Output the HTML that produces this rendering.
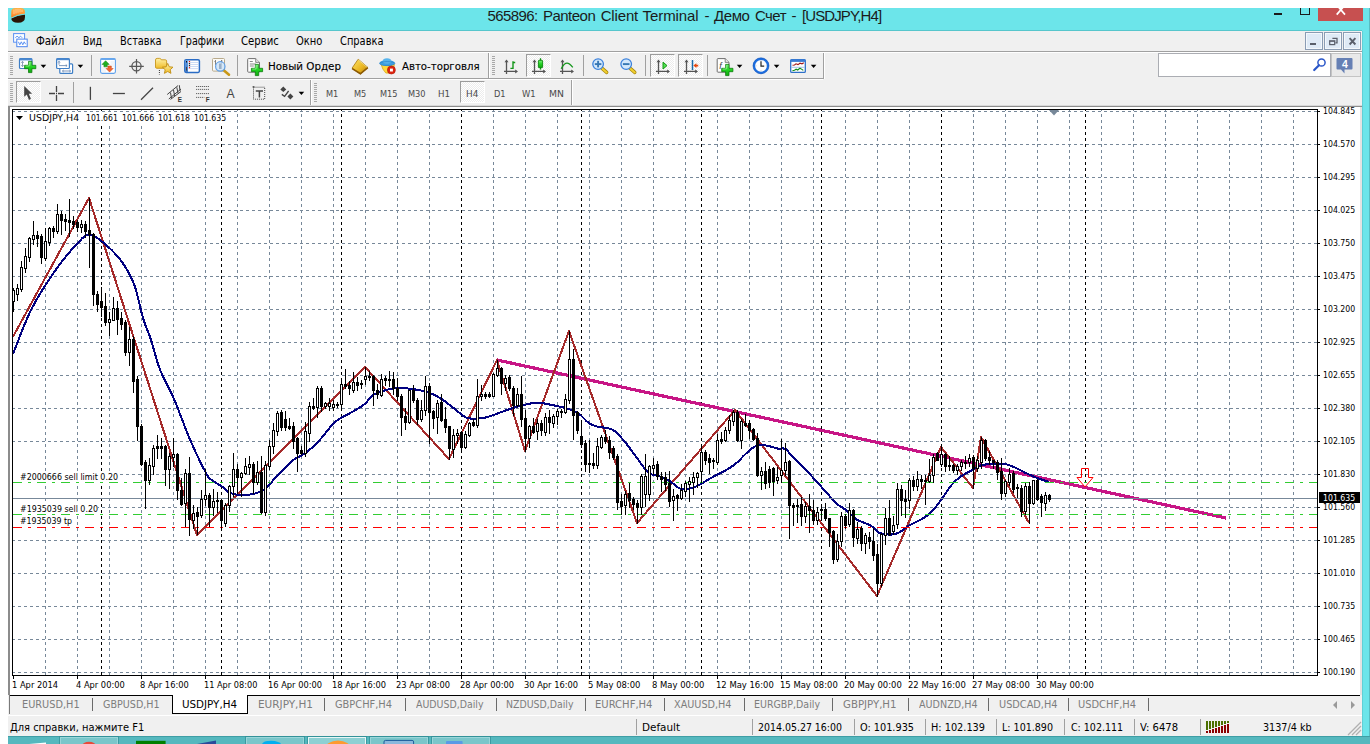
<!DOCTYPE html>
<html lang="ru"><head><meta charset="utf-8"><title>565896: Panteon Client Terminal - Демо Счет - [USDJPY,H4]</title>
<style>
html,body{margin:0;padding:0;background:#fff;}
body{width:1370px;height:744px;position:relative;overflow:hidden;font-family:"Liberation Sans",sans-serif;}
.a{position:absolute;display:block;}
.t{position:absolute;white-space:pre;font-family:"Liberation Sans",sans-serif;}
.s{font-family:"DejaVu Sans Condensed","DejaVu Sans","Liberation Sans",sans-serif;}
svg text{font-family:"Liberation Sans",sans-serif;}
</style></head><body>
<div class="a" style="left:8px;top:8px;width:1362px;height:728px;background:#6ce5ea;"></div><div class="a" style="left:8px;top:30px;width:1354px;height:1px;background:#56c6cc;"></div><div class="a" style="left:1369px;top:8px;width:1px;height:728px;background:#58bcc2;"></div><div class="a" style="left:1362px;top:31px;width:1px;height:705px;background:#5fd0d6;"></div><div class="a" style="left:8px;top:31px;width:1354px;height:705px;background:#f0f0f0;"></div><div class="t" style="left:487.50px;top:6.92px;font-size:15px;line-height:17.235px;color:#1b1b1b;letter-spacing:-0.603px;">565896:</div><div class="t" style="left:542.90px;top:6.92px;font-size:15px;line-height:17.235px;color:#1b1b1b;letter-spacing:-0.498px;">Panteon</div><div class="t" style="left:600.70px;top:6.92px;font-size:15px;line-height:17.235px;color:#1b1b1b;letter-spacing:-0.158px;">Client</div><div class="t" style="left:642.60px;top:6.92px;font-size:15px;line-height:17.235px;color:#1b1b1b;letter-spacing:-0.085px;">Terminal</div><div class="t" style="left:704.60px;top:6.92px;font-size:15px;line-height:17.235px;color:#1b1b1b;">-</div><div class="t" style="left:714.10px;top:6.92px;font-size:15px;line-height:17.235px;color:#1b1b1b;letter-spacing:-0.439px;">Демо</div><div class="t" style="left:754.90px;top:6.92px;font-size:15px;line-height:17.235px;color:#1b1b1b;letter-spacing:-0.523px;">Счет</div><div class="t" style="left:791.40px;top:6.92px;font-size:15px;line-height:17.235px;color:#1b1b1b;">-</div><div class="t" style="left:801.90px;top:6.92px;font-size:15px;line-height:17.235px;color:#1b1b1b;letter-spacing:-0.875px;">[USDJPY,H4]</div><div class="a" style="left:1274px;top:13px;width:8px;height:2px;background:#1a1a1a;"></div><div class="a" style="left:1300px;top:8px;width:10px;height:7px;background:transparent;border:1px solid #1a1a1a;border-top:none;box-sizing:border-box;"></div><div class="a" style="left:1318px;top:8px;width:45px;height:13px;background:#c75050;"></div><svg class="a" style="left:1335px;top:8px" width="12" height="8"><path d="M1.7,-3 L10,6.6 M10,-3 L1.7,6.6" stroke="#fff" stroke-width="1.7"/></svg><svg class="a" style="left:11px;top:8px" width="15" height="16" viewBox="0 0 15 16"><defs><linearGradient id="og" x1="0" y1="0" x2="0" y2="1"><stop offset="0" stop-color="#ffb040"/><stop offset=".55" stop-color="#ff9a3c"/><stop offset="1" stop-color="#f07818"/></linearGradient></defs><path d="M0.2,10 Q0.2,14.8 7,14.8 Q14,14.8 14,9 L14,6.4 Q6,7 0.2,10.4z" fill="#2a1405"/><path d="M0.2,9.8 L0.2,4.2 Q0.2,0 4.6,0 L9.6,0 Q14,0 14,4.2 L14,5.8 Q6.5,6.4 0.2,9.8 Z" fill="url(#og)"/><path d="M0.2,10.1 Q6.5,6.8 14,6.1" stroke="#6ce5ea" stroke-width=".8" fill="none"/><path d="M3,1.6 v4.6 M5,1 v4.4 M7,.8 v4 M9,1 v3.4 M11,1.6 v2.4" stroke="#ffe2c0" stroke-width=".9" opacity=".75"/></svg><div class="t s" style="left:36.30px;top:34.86px;font-size:12px;line-height:13.968px;color:#000;transform:scaleX(0.9489);transform-origin:0 0;">Файл</div><div class="t s" style="left:83.20px;top:34.86px;font-size:12px;line-height:13.968px;color:#000;transform:scaleX(0.8682);transform-origin:0 0;">Вид</div><div class="t s" style="left:120.00px;top:34.86px;font-size:12px;line-height:13.968px;color:#000;transform:scaleX(0.9094);transform-origin:0 0;">Вставка</div><div class="t s" style="left:179.60px;top:34.86px;font-size:12px;line-height:13.968px;color:#000;transform:scaleX(0.8869);transform-origin:0 0;">Графики</div><div class="t s" style="left:241.00px;top:34.86px;font-size:12px;line-height:13.968px;color:#000;transform:scaleX(0.9367);transform-origin:0 0;">Сервис</div><div class="t s" style="left:296.20px;top:34.86px;font-size:12px;line-height:13.968px;color:#000;transform:scaleX(0.9204);transform-origin:0 0;">Окно</div><div class="t s" style="left:340.00px;top:34.86px;font-size:12px;line-height:13.968px;color:#000;transform:scaleX(0.9144);transform-origin:0 0;">Справка</div><svg class="a" style="left:13px;top:33px" width="16" height="16" viewBox="0 0 16 16"><rect x="0.6" y="0.6" width="11" height="8.6" fill="#fbfdff" stroke="#5a90f2" stroke-width="1"/><path d="M2.4,4.8 l1.8,-1.8 l1.6,1.8 l1.8,-1.6 l1.6,1.6" stroke="#4a86f0" fill="none" stroke-width=".9"/><rect x="3.8" y="6.1" width="10.4" height="7.6" fill="#fff" stroke="#4a84ee" stroke-width="1"/><path d="M5.4,8.8 l1.4,3 l1.5,-3 l1.5,3 l1.4,-3 l1.4,2.4" stroke="#4a86f0" fill="none" stroke-width=".9"/></svg><div class="a" style="left:1305px;top:32px;width:17.5px;height:17.5px;background:#dfeaf6;border:1px solid #8a9cb4;box-sizing:border-box;box-shadow:inset 0 0 0 1px #f4f8fc;"></div><div class="a" style="left:1324px;top:32px;width:17.5px;height:17.5px;background:#dfeaf6;border:1px solid #8a9cb4;box-sizing:border-box;box-shadow:inset 0 0 0 1px #f4f8fc;"></div><div class="a" style="left:1343px;top:32px;width:17.5px;height:17.5px;background:#dfeaf6;border:1px solid #8a9cb4;box-sizing:border-box;box-shadow:inset 0 0 0 1px #f4f8fc;"></div><svg class="a" style="left:1305px;top:32px" width="56" height="18"><rect x="5" y="11" width="6" height="2" fill="#5a5f6b"/><path d="M27.4,6.3 h4.6 v4.6 h-1.6" stroke="#5a5f6b" fill="none" stroke-width="1.3"/><rect x="24.7" y="9.2" width="5" height="3.4" fill="none" stroke="#5a5f6b" stroke-width="1.2"/><path d="M24.1,8.8 h6.2" stroke="#5a5f6b" stroke-width="1"/><path d="M44.6,6.2 l5.8,6.3 M50.4,6.2 l-5.8,6.3" stroke="#5a5f6b" stroke-width="1.9"/></svg><div class="a" style="left:8px;top:51px;width:1354px;height:1px;background:#a0a0a0;"></div><div class="a" style="left:8px;top:52px;width:1354px;height:1px;background:#fff;"></div><div class="a" style="left:8px;top:78px;width:815px;height:1px;background:#a0a0a0;"></div><div class="a" style="left:8px;top:79px;width:815px;height:1px;background:#fff;"></div><div class="a" style="left:823px;top:53px;width:1px;height:26px;background:#a0a0a0;"></div><div class="a" style="left:824px;top:53px;width:1px;height:26px;background:#fff;"></div><div class="a" style="left:488px;top:53px;width:1px;height:25px;background:#a0a0a0;"></div><div class="a" style="left:489px;top:53px;width:1px;height:25px;background:#fff;"></div><div class="a" style="left:571px;top:80px;width:1px;height:25px;background:#a0a0a0;"></div><div class="a" style="left:572px;top:80px;width:1px;height:25px;background:#fff;"></div><div class="a" style="left:310px;top:80px;width:1px;height:25px;background:#a0a0a0;"></div><div class="a" style="left:311px;top:80px;width:1px;height:25px;background:#fff;"></div><div class="a" style="left:10px;top:56px;width:3px;height:19px;background:repeating-linear-gradient(#a8a8a8 0 1px,transparent 1px 2px)"></div><div class="a" style="left:492px;top:56px;width:3px;height:19px;background:repeating-linear-gradient(#a8a8a8 0 1px,transparent 1px 2px)"></div><div class="a" style="left:10px;top:83px;width:3px;height:19px;background:repeating-linear-gradient(#a8a8a8 0 1px,transparent 1px 2px)"></div><div class="a" style="left:314px;top:83px;width:3px;height:19px;background:repeating-linear-gradient(#a8a8a8 0 1px,transparent 1px 2px)"></div><div class="a" style="left:91px;top:55px;width:1px;height:21px;background:#a0a0a0;"></div><div class="a" style="left:237px;top:55px;width:1px;height:21px;background:#a0a0a0;"></div><div class="a" style="left:583px;top:55px;width:1px;height:21px;background:#a0a0a0;"></div><div class="a" style="left:645px;top:55px;width:1px;height:21px;background:#a0a0a0;"></div><div class="a" style="left:707px;top:55px;width:1px;height:21px;background:#a0a0a0;"></div><div class="a" style="left:73px;top:82px;width:1px;height:21px;background:#a0a0a0;"></div><div class="a" style="left:526px;top:54px;width:25px;height:23px;background:#f6f6f6;border:1px solid #9c9c9c;border-right-color:#fff;border-bottom-color:#fff;box-sizing:border-box;background-image:repeating-conic-gradient(#fff 0 25%,#ececec 0 50%);background-size:2px 2px;"></div><div class="a" style="left:650px;top:54px;width:25px;height:23px;background:#f6f6f6;border:1px solid #9c9c9c;border-right-color:#fff;border-bottom-color:#fff;box-sizing:border-box;background-image:repeating-conic-gradient(#fff 0 25%,#ececec 0 50%);background-size:2px 2px;"></div><div class="a" style="left:678px;top:54px;width:25px;height:23px;background:#f6f6f6;border:1px solid #9c9c9c;border-right-color:#fff;border-bottom-color:#fff;box-sizing:border-box;background-image:repeating-conic-gradient(#fff 0 25%,#ececec 0 50%);background-size:2px 2px;"></div><div class="a" style="left:16px;top:81px;width:25px;height:22px;background:#f6f6f6;border:1px solid #9c9c9c;border-right-color:#fff;border-bottom-color:#fff;box-sizing:border-box;background-image:repeating-conic-gradient(#fff 0 25%,#ececec 0 50%);background-size:2px 2px;"></div><div class="a" style="left:460px;top:81px;width:25px;height:22px;background:#f6f6f6;border:1px solid #9c9c9c;border-right-color:#fff;border-bottom-color:#fff;box-sizing:border-box;background-image:repeating-conic-gradient(#fff 0 25%,#ececec 0 50%);background-size:2px 2px;"></div><svg class="a" style="left:0;top:0" width="1370" height="110" viewBox="0 0 1370 110"><defs>
<linearGradient id="gp" x1="0" y1="0" x2="0" y2="1"><stop offset="0" stop-color="#7df07d"/><stop offset=".5" stop-color="#1fd21f"/><stop offset="1" stop-color="#12a512"/></linearGradient>
<linearGradient id="gy" x1="0" y1="0" x2="0" y2="1"><stop offset="0" stop-color="#fff2a8"/><stop offset="1" stop-color="#f0bc28"/></linearGradient>
<linearGradient id="gb" x1="0" y1="0" x2="1" y2="1"><stop offset="0" stop-color="#ffe668"/><stop offset=".6" stop-color="#e8b420"/><stop offset="1" stop-color="#b07808"/></linearGradient>
<linearGradient id="gl" x1="0" y1="0" x2="0" y2="1"><stop offset="0" stop-color="#e8f4fe"/><stop offset="1" stop-color="#b8d8f4"/></linearGradient>
<linearGradient id="gw" x1="0" y1="0" x2="0" y2="1"><stop offset="0" stop-color="#5a9ae6"/><stop offset="1" stop-color="#2e6cc0"/></linearGradient>
<g id="plus"><path d="M-1.7,-5.6 h3.4 v3.9 h3.9 v3.4 h-3.9 v3.9 h-3.4 v-3.9 h-3.9 v-3.4 h3.9z" fill="url(#gp)" stroke="#0c7c0c" stroke-width=".8" stroke-linejoin="miter"/><path d="M-1,-4.6 v3.6 h-3.6" stroke="#b8f8b8" stroke-width=".7" fill="none" opacity=".8"/></g>
<g id="dd"><path d="M-2.8,0 h5.6 l-2.8,3.2z" fill="#000"/></g>
<g id="axes"><path d="M2.5,1 v13.5 M0,12 h13" stroke="#555" stroke-width="1.3" fill="none"/><path d="M2.5,0 l-2,2.8 h4z M14,12 l-2.8,-2 v4z" fill="#555"/></g>
</defs><rect x="19.5" y="58.7" width="12.5" height="9.8" rx="1" fill="#fff" stroke="#3f7fc6" stroke-width="1.2"/><rect x="19.5" y="58.4" width="12.5" height="2" fill="#4a88d0"/><path d="M22.5,61.5 v5 M21.3,62.8 l1.2,-1.5 l1.2,1.5 M21.3,65.2 l1.2,1.5 l1.2,-1.5" stroke="#7f95b0" stroke-width=".9" fill="none"/><use href="#plus" x="30.2" y="67"/><use href="#dd" x="43.4" y="64.8"/><rect x="59.8" y="63.8" width="12.8" height="9.6" rx="1" fill="#fff" stroke="#3f7fc6" stroke-width="1.2"/><rect x="56.6" y="58.7" width="12.8" height="9.8" rx="1" fill="#fff" stroke="#3f7fc6" stroke-width="1.2"/><rect x="56.6" y="58.4" width="12.8" height="1.8" fill="#4a88d0"/><path d="M59,61.3 v3.4 M58,62.5 l1,-1.2 l1,1.2 M59,65.6 h8 M65.8,64.6 l1.3,1 l-1.3,1 M62.5,71 h8 M69.3,70 l1.3,1 l-1.3,1 M63.7,70 l-1.3,1 l1.3,1" stroke="#6f8db5" stroke-width=".9" fill="none"/><use href="#dd" x="80.4" y="64.8"/><rect x="100.6" y="58.6" width="14.8" height="14.8" rx="1.6" fill="#fff" stroke="#5fa0ea" stroke-width="1.1"/><rect x="100.6" y="58.3" width="14.8" height="1.7" rx=".8" fill="#6aa8ee"/><path d="M110.5,62 h3.6 M110.5,64 h3.6 M110.5,66 h3.6 M102,68 h4 M102,70 h4 M102,72 h4" stroke="#dde4ee" stroke-width=".8"/><path d="M105.6,60.7 l3.6,3.7 h-1.9 v2.4 h-3.4 v-2.4 h-1.9z" fill="#20b020" stroke="#0c7c0c" stroke-width=".5"/><path d="M109.6,72.1 l3.6,-3.7 h-1.9 v-2.4 h-3.4 v2.4 h-1.9z" fill="#f26430" stroke="#c43c0c" stroke-width=".5"/><circle cx="136.5" cy="66.3" r="4.6" fill="none" stroke="#585858" stroke-width="1.3"/><path d="M129.2,66.3 h14.6 M136.5,59 v14.6" stroke="#585858" stroke-width="1.2"/><path d="M155.5,60 q0,-1.6 1.6,-1.6 h2.6 q1.2,0 1.6,1.4 h4 q1.3,0 1.3,1.3 v6 q0,1.2 -1.3,1.2 h-8.5 q-1.3,0 -1.3,-1.2z" fill="url(#gy)" stroke="#c8961c" stroke-width=".9"/><path d="M159.4,70 v4.5" stroke="#333" stroke-width="1" stroke-dasharray="1 1"/><path d="M167.7,63.4 l1.55,3.4 l3.7,.4 l-2.75,2.5 l.75,3.65 l-3.25,-1.85 l-3.25,1.85 l.75,-3.65 l-2.75,-2.5 l3.7,-.4z" fill="url(#gy)" stroke="#c08c10" stroke-width=".9"/><rect x="184.8" y="59.8" width="14.6" height="12.6" rx="1.3" fill="#fff" stroke="#2a6cc4" stroke-width="1.5"/><rect x="185.3" y="60.3" width="2.6" height="11.6" fill="url(#gw)"/><path d="M188.5,62.5 h10.5 M188.5,64.5 h10.5 M188.5,66.5 h10.5 M188.5,68.6 h10.5" stroke="#b8cdf0" stroke-width=".7"/><rect x="188.8" y="61" width="1.3" height="1.2" fill="#e01010"/><rect x="188.8" y="63" width="1.3" height="1.2" fill="#222"/><rect x="188.8" y="65" width="1.3" height="1.2" fill="#222"/><rect x="188.8" y="67.1" width="1.3" height="1.2" fill="#e01010"/><rect x="186" y="61" width="1" height="1.5" fill="#111"/><rect x="186" y="67" width="1" height="3.5" fill="#444"/><rect x="212.5" y="58.5" width="12" height="12.6" rx="1" fill="#fbfaf6" stroke="#b8aa8c" stroke-width="1"/><path d="M215.5,60 v5 M214.5,61.5 h1 M221.5,60 v4 M221.5,61 h1" stroke="#777" stroke-width=".9"/><path d="M224,70.4 l5,4.3" stroke="#c89818" stroke-width="2.6" stroke-linecap="round"/><circle cx="220.3" cy="66.4" r="4.7" fill="#cfe4f8" fill-opacity=".85" stroke="#5f9ee6" stroke-width="1.2"/><rect x="219" y="63.5" width="2.6" height="5.5" fill="#9ab0c8"/><path d="M248.5,58.6 h7.2 l3.8,3.8 v9 q0,.8 -.8,.8 h-10.2 q-.8,0 -.8,-.8 v-12 q0,-.8 .8,-.8z" fill="#fff" stroke="#6e6e6e" stroke-width="1"/><path d="M255.7,58.6 v3.8 h3.8" fill="#e8e8e8" stroke="#6e6e6e" stroke-width=".8"/><path d="M249.8,61.5 h3 M249.8,64 h6 M249.8,66 h4" stroke="#8a8a8a" stroke-width="1.1"/><use href="#plus" x="257" y="70"/><path d="M352,68.2 l6.2,-9 l9.8,8.4 l-7.6,6.4z" fill="url(#gb)" stroke="#a87408" stroke-width=".8"/><path d="M352.2,68.6 l8.2,5.2 l7.4,-6.2" fill="none" stroke="#8c5a04" stroke-width="1.6"/><path d="M358.6,60 l8.6,7.4" stroke="#fff4b0" stroke-width=".8" opacity=".8"/><path d="M381,64 l13.4,.4 l-1.2,6.2 q-3,3.4 -7.4,2.4 q-3.4,-3.2 -4.8,-9z" fill="#ffd83c" stroke="#d8a818" stroke-width=".8"/><ellipse cx="387.2" cy="63" rx="7.8" ry="2.9" fill="#3f9fe0"/><ellipse cx="387" cy="61" rx="4.2" ry="2.8" fill="#58b4ec"/><ellipse cx="387.2" cy="63.6" rx="7.6" ry="2" fill="none" stroke="#2a80c8" stroke-width=".7"/><circle cx="391.4" cy="70" r="4" fill="#dd2410" stroke="#b01404" stroke-width=".6"/><rect x="390" y="68.6" width="2.9" height="2.9" fill="#fff"/><use href="#axes" x="504" y="59.4"/><path d="M513,61.2 v7.8 M513,62.5 h2.2 M510.4,68.4 h2.6" stroke="#14961a" stroke-width="1.4" fill="none"/><use href="#axes" x="532" y="59.4"/><path d="M540.5,58.2 v11.4" stroke="#14961a" stroke-width="1.3"/><rect x="538.4" y="60.3" width="4.2" height="7.4" rx=".6" fill="url(#gp)" stroke="#0d8a0d" stroke-width=".9"/><use href="#axes" x="560" y="59.4"/><path d="M561.2,68.8 q3,-5.6 5.8,-5.6 q2.4,0 5.8,4.2" stroke="#14961a" stroke-width="1.3" fill="none"/><path d="M602.1,68.4 l4.6,4" stroke="#a8860c" stroke-width="3.4" stroke-linecap="round"/><path d="M602.1,68.4 l4.6,4" stroke="#f0d030" stroke-width="2" stroke-linecap="round"/><circle cx="598.1" cy="64.1" r="5.3" fill="#d4e8fb" stroke="#3c82dc" stroke-width="1.3"/><path d="M594.8,64.1 h6.6" stroke="#3878b4" stroke-width="1.9"/><path d="M598.1,60.8 v6.6" stroke="#3878b4" stroke-width="1.9"/><path d="M630.2,68.4 l4.6,4" stroke="#a8860c" stroke-width="3.4" stroke-linecap="round"/><path d="M630.2,68.4 l4.6,4" stroke="#f0d030" stroke-width="2" stroke-linecap="round"/><circle cx="626.2" cy="64.1" r="5.3" fill="#d4e8fb" stroke="#3c82dc" stroke-width="1.3"/><path d="M622.9,64.1 h6.6" stroke="#3878b4" stroke-width="1.9"/><use href="#axes" x="656" y="59.4"/><path d="M663,62.2 v6.8 l4,-3.4z" fill="#50e050" stroke="#149a14" stroke-width="1"/><use href="#axes" x="684" y="59.4"/><path d="M692.5,60 v10" stroke="#1a6aa8" stroke-width="1.5"/><path d="M693.4,65.6 l3,-2.4 v1.6 h1.8 v1.6 h-1.8 v1.6z" fill="#e8480c"/><path d="M718,58.6 h7.2 l3.8,3.8 v9 q0,.8 -.8,.8 h-10.2 q-.8,0 -.8,-.8 v-12 q0,-.8 .8,-.8z" fill="#fff" stroke="#6e6e6e" stroke-width="1"/><path d="M725.2,58.6 v3.8 h3.8" fill="#e8e8e8" stroke="#6e6e6e" stroke-width=".8"/><text x="719.3" y="68.5" font-size="9" font-style="italic" font-family="Liberation Serif,serif" fill="#444">f</text><use href="#plus" x="727.3" y="70"/><use href="#dd" x="739.6" y="64.8"/><circle cx="761" cy="65.8" r="7" fill="#fdfdfd" stroke="#1c6ee0" stroke-width="2.2"/><circle cx="761" cy="65.8" r="8" fill="none" stroke="#1450b0" stroke-width=".5"/><path d="M761,61.3 v4.8 h3.2" stroke="#222" stroke-width="1.2" fill="none"/><path d="M761,60.3 v.8 M761,70.5 v.8 M755.6,65.8 h.8 M765.8,65.8 h.8" stroke="#9ab" stroke-width=".8"/><use href="#dd" x="776.6" y="64.8"/><rect x="790.7" y="59.6" width="14.6" height="12.8" rx="1" fill="#fff" stroke="#2e70c8" stroke-width="1.3"/><rect x="790.7" y="59.3" width="14.6" height="2.6" fill="#3a7cd4"/><path d="M792.5,65.2 l2,-.2 l1.5,-1.2 l2,.8 l2,-1.4 l2,.6 l1.8,-1" stroke="#a01818" stroke-width="1.1" fill="none"/><path d="M791.5,67.3 h13" stroke="#8fb4e4" stroke-width=".8"/><path d="M792.5,70.6 l2,-.4 l1.6,-1 l1.6,.8 l2.2,-1.8 l2,1.2 l1.4,1" stroke="#148c1c" stroke-width="1.1" fill="none"/><use href="#dd" x="813.6" y="64.8"/><path d="M24.2,85.9 v10.9 l2.6,-2.2 l2.2,5.3 l1.9,-1.1 l-2.1,-5 h3.3z" fill="#444"/><path d="M49,93.5 h6 M58,93.5 h6 M56.5,86 v6 M56.5,95 v6 M56,93.5 h1" stroke="#444" stroke-width="1.3"/><path d="M90.4,86.8 v13.1" stroke="#444" stroke-width="1.3"/><path d="M112.9,93.5 h12" stroke="#444" stroke-width="1.3"/><path d="M141,99.7 L153,87.8" stroke="#444" stroke-width="1.3"/><path d="M167.2,94.5 L178,85.6 M168.8,99 L181,89 M170.5,99.4 L181,91.5" stroke="#444" stroke-width="1" fill="none"/><path d="M170.5,92.5 l1,6 M173.5,90 l1.2,6 M176.8,87.3 l1.2,6 M179.3,85.2 l.8,6" stroke="#444" stroke-width="1"/><path d="M196.2,86.5 H209" stroke="#444" stroke-width="1" stroke-dasharray="1 1"/><path d="M196.2,89.4 H209" stroke="#444" stroke-width="1" stroke-dasharray="1 1"/><path d="M196.2,93.6 H209" stroke="#444" stroke-width="1" stroke-dasharray="1 1"/><path d="M196.2,97.4 H204.5" stroke="#444" stroke-width="1" stroke-dasharray="1 1"/><text x="226.6" y="97.7" font-size="12.2" fill="#444">A</text><rect x="253.5" y="87.2" width="11.2" height="12" fill="none" stroke="#444" stroke-width="1" stroke-dasharray="1 1"/><rect x="252.6" y="86.2" width="1.8" height="1.4" fill="#444"/><path d="M255.8,90.9 h7.2 M259.4,90.9 v6.6" stroke="#444" stroke-width="1.5"/><path d="M283.3,86.4 l3,3 l-3,2.6 l-3,-2.6z M290.4,93.6 l3,2.8 l-3,3 l-3,-3z" fill="#444"/><path d="M281.8,94.4 l2.8,2 l4,-5.4" stroke="#444" stroke-width="1.3" fill="none"/><use href="#dd" x="301.4" y="91.8"/></svg><div class="t" style="left:177.80px;top:96.00px;font-size:6.3px;line-height:7.2387px;color:#333;font-weight:bold;">E</div><div class="t" style="left:205.70px;top:96.00px;font-size:6.3px;line-height:7.2387px;color:#333;font-weight:bold;">F</div><div class="t s" style="left:268.40px;top:60.59px;font-size:11px;line-height:12.804px;color:#000;transform:scaleX(1.0428);transform-origin:0 0;-webkit-text-stroke:0.12px #000;">Новый Ордер</div><div class="t s" style="left:402.30px;top:60.59px;font-size:11px;line-height:12.804px;color:#000;transform:scaleX(1.0271);transform-origin:0 0;-webkit-text-stroke:0.12px #000;">Авто-торговля</div><div class="t s" style="left:325.70px;top:89.25px;font-size:9px;line-height:10.476px;color:#4a4a4a;transform:scaleX(1.0134);transform-origin:0 0;">M1</div><div class="t s" style="left:353.70px;top:89.25px;font-size:9px;line-height:10.476px;color:#4a4a4a;transform:scaleX(1.0134);transform-origin:0 0;">M5</div><div class="t s" style="left:379.50px;top:89.25px;font-size:9px;line-height:10.476px;color:#4a4a4a;transform:scaleX(1.0123);transform-origin:0 0;">M15</div><div class="t s" style="left:407.50px;top:89.25px;font-size:9px;line-height:10.476px;color:#4a4a4a;transform:scaleX(1.0123);transform-origin:0 0;">M30</div><div class="t s" style="left:438.00px;top:89.25px;font-size:9px;line-height:10.476px;color:#4a4a4a;transform:scaleX(1.0675);transform-origin:0 0;">H1</div><div class="t s" style="left:465.50px;top:89.25px;font-size:9px;line-height:10.476px;color:#4a4a4a;transform:scaleX(1.0942);transform-origin:0 0;">H4</div><div class="t s" style="left:494.40px;top:89.25px;font-size:9px;line-height:10.476px;color:#4a4a4a;transform:scaleX(1.0188);transform-origin:0 0;">D1</div><div class="t s" style="left:522.40px;top:89.25px;font-size:9px;line-height:10.476px;color:#4a4a4a;transform:scaleX(1.0337);transform-origin:0 0;">W1</div><div class="t s" style="left:548.70px;top:89.25px;font-size:9px;line-height:10.476px;color:#4a4a4a;transform:scaleX(1.1424);transform-origin:0 0;">MN</div><div class="a" style="left:1158px;top:53px;width:173px;height:24px;background:#fff;border:1px solid #abadb3;box-sizing:border-box;"></div><div class="a" style="left:1331px;top:53px;width:30px;height:24px;background:#e9e9e9;border:1px solid #c4c4c4;box-sizing:border-box;"></div><svg class="a" style="left:1311px;top:56px" width="18" height="18"><circle cx="10.5" cy="6.5" r="3.6" fill="#fff" stroke="#2a56c8" stroke-width="1.5"/><path d="M8,9.2 L3.2,14" stroke="#2a56c8" stroke-width="2.2" stroke-linecap="round"/></svg><svg class="a" style="left:1336px;top:57px" width="18" height="18"><path d="M1.5,1 h14 q1,0 1,1 v9.5 q0,1 -1,1 h-7 v4 l-3.5,-4 h-3.5 q-1,0 -1,-1 v-9.5 q0,-1 1,-1z" fill="#6680b4"/><text x="9" y="10.8" font-family="Liberation Sans,sans-serif" font-weight="bold" font-size="10.5" fill="#fff" text-anchor="middle">4</text></svg><div class="a" style="left:8px;top:105px;width:1354px;height:1px;background:#d9d9d9;"></div><div class="a" style="left:8px;top:106px;width:1354px;height:1px;background:#8c8c8c;"></div><div class="a" style="left:8px;top:107px;width:1353px;height:588px;background:#fff;"></div><div class="a" style="left:8px;top:107px;width:2px;height:588px;background:#8c8c8c;"></div><div class="a" style="left:9px;top:695px;width:1px;height:19px;background:#7a7a7a;"></div><div class="a" style="left:1360px;top:107px;width:2px;height:588px;background:#e3e3e3;"></div><svg class="a" style="left:0;top:0" width="1370" height="744" shape-rendering="crispEdges"><defs><clipPath id="cc"><rect x="13" y="110" width="1304" height="565"/></clipPath></defs><path d="M13,111.5 H1317 M13,144.5 H1317 M13,177.5 H1317 M13,210.5 H1317 M13,243.5 H1317 M13,276.5 H1317 M13,309.5 H1317 M13,342.5 H1317 M13,375.5 H1317 M13,408.5 H1317 M13,441.5 H1317 M13,474.5 H1317 M13,507.5 H1317 M13,540.5 H1317 M13,573.5 H1317 M13,606.5 H1317 M13,639.5 H1317 M13,672.5 H1317 " stroke="#778899" stroke-width="1" stroke-dasharray="3 3" stroke-dashoffset="1" fill="none"/><path d="M45.5,110 V675 M77.5,110 V675 M109.5,110 V675 M141.5,110 V675 M173.5,110 V675 M205.5,110 V675 M237.5,110 V675 M269.5,110 V675 M301.5,110 V675 M333.5,110 V675 M365.5,110 V675 M397.5,110 V675 M429.5,110 V675 M461.5,110 V675 M493.5,110 V675 M525.5,110 V675 M557.5,110 V675 M589.5,110 V675 M621.5,110 V675 M653.5,110 V675 M685.5,110 V675 M717.5,110 V675 M749.5,110 V675 M781.5,110 V675 M813.5,110 V675 M845.5,110 V675 M877.5,110 V675 M909.5,110 V675 M941.5,110 V675 M973.5,110 V675 M1005.5,110 V675 M1037.5,110 V675 M1069.5,110 V675 M1101.5,110 V675 M1133.5,110 V675 M1165.5,110 V675 M1197.5,110 V675 M1229.5,110 V675 M1261.5,110 V675 M1293.5,110 V675 " stroke="#778899" stroke-width="1" stroke-dasharray="3 3" stroke-dashoffset="2" fill="none"/><path d="M101.5,110 V675 M221.5,110 V675 M341.5,110 V675 M461.5,110 V675 M581.5,110 V675 M701.5,110 V675 M821.5,110 V675 M941.5,110 V675 M1085.5,110 V675 " stroke="#000" stroke-width="1" stroke-dasharray="3 3" stroke-dashoffset="2" fill="none"/><g clip-path="url(#cc)"><line x1="497" y1="360" x2="1226" y2="518" stroke="#c71585" stroke-width="3.2"/><polyline points="13,336.7 89,198 197,535 365,367 449,459 497,360 525,451 569,331 637,523 735,410 877,596 941,447 973,488 981,437 1029,523" stroke="#a52a2a" stroke-width="2.05" fill="none" stroke-linejoin="round"/><path d="M13,354 C16.2,346.3 24.8,322.1 32,308 C39.2,293.9 48.7,280.0 56,269.5 C63.3,259.0 70.5,250.8 76,245 C81.5,239.2 84.2,234.7 89,234.5 C93.8,234.3 99.5,239.4 105,244 C110.5,248.6 117.2,255.3 122,262 C126.8,268.7 130.5,274.7 134,284 C137.5,293.3 140.2,308.7 143,318 C145.8,327.3 148.2,331.4 151,340 C153.8,348.6 156.2,359.8 160,369.6 C163.8,379.4 169.0,387.4 174,399 C179.0,410.6 184.7,427.2 190,439.5 C195.3,451.8 202.4,466.3 206,473 C209.6,479.7 208.7,477.6 211.4,479.8 C214.1,482.1 218.9,484.3 222,486.5 C225.1,488.7 226.8,491.6 230,493 C233.2,494.4 236.9,494.9 241,495 C245.1,495.1 250.4,494.8 254.4,493.8 C258.4,492.8 261.4,491.8 265,489 C268.6,486.2 271.5,481.7 276,477 C280.5,472.3 287.1,465.0 292,461 C296.9,457.0 301.0,456.4 305.5,453 C310.0,449.6 314.1,446.0 319,440.8 C323.9,435.6 330.1,426.5 335,422 C339.9,417.5 343.7,416.9 348.5,414 C353.3,411.1 359.8,407.9 364,404.6 C368.2,401.4 369.7,397.1 374,394.5 C378.3,391.9 385.9,390.1 390,389 C394.1,387.9 394.7,388.0 398.5,388 C402.3,388.0 407.6,388.2 412.6,389 C417.6,389.8 424.0,390.9 428.7,392.5 C433.4,394.1 436.8,396.0 440.8,398.5 C444.9,401.0 449.0,404.5 453,407.6 C457.0,410.7 461.7,415.1 465,417 C468.3,418.9 469.7,418.6 473,418.7 C476.3,418.8 481.0,418.5 485,417.7 C489.0,416.9 492.7,415.2 497,413.7 C501.3,412.2 506.2,410.1 511,408.6 C515.8,407.1 521.0,405.6 525.5,404.6 C530.0,403.6 533.9,402.6 538,402.6 C542.1,402.6 545.7,403.8 550,404.6 C554.3,405.5 559.4,406.4 564,407.7 C568.6,409.0 573.4,410.2 577.5,412.7 C581.6,415.2 585.3,420.5 588.5,422.8 C591.7,425.1 592.6,425.2 596.6,426.4 C600.6,427.6 608.0,427.2 612.7,429.8 C617.4,432.4 621.0,437.3 625,442 C629.0,446.7 633.1,452.9 637,458 C640.9,463.1 644.6,469.6 648.5,472.7 C652.4,475.8 656.9,475.2 660.6,476.7 C664.3,478.2 667.2,479.7 670.6,481.7 C674.0,483.7 677.0,487.8 680.7,488.8 C684.4,489.8 689.1,488.8 692.8,487.8 C696.5,486.8 699.3,484.7 703,482.7 C706.7,480.7 711.0,477.9 715,475.7 C719.0,473.5 723.3,471.8 727,469.6 C730.7,467.4 734.0,465.1 737,462.6 C740.0,460.1 742.0,457.2 745,454.5 C748.0,451.8 751.6,448.0 755,446.5 C758.4,445.0 761.6,445.1 765.4,445.4 C769.1,445.7 774.1,447.9 777.5,448.5 C780.9,449.1 783.4,447.8 785.6,448.9 C787.9,450.0 787.6,451.5 791,455 C794.4,458.5 800.8,464.5 806,470 C811.2,475.5 817.3,482.4 822.4,488 C827.5,493.6 832.5,499.7 836.5,503.4 C840.5,507.1 843.2,507.7 846.6,510.4 C850.0,513.1 852.7,517.0 856.7,519.5 C860.7,522.0 867.1,523.4 870.8,525.6 C874.5,527.8 875.5,531.1 878.9,532.6 C882.3,534.1 887.6,534.6 891,534.6 C894.4,534.6 896.0,534.1 899,532.6 C902.0,531.1 905.3,527.8 909,525.6 C912.7,523.4 917.3,521.7 921,519.5 C924.7,517.3 927.6,515.9 931,512.5 C934.4,509.1 938.0,504.0 941.4,499.4 C944.8,494.8 948.1,488.9 951.5,485 C954.9,481.1 958.0,478.5 961.5,476 C965.0,473.5 969.5,471.8 972.7,470 C975.9,468.2 977.7,466.5 980.7,465.5 C983.7,464.5 986.8,464.2 990.8,464 C994.8,463.8 1001.0,463.4 1005,464 C1009.0,464.6 1011.3,465.9 1015,467.5 C1018.7,469.1 1023.0,471.8 1027,473.6 C1031.0,475.5 1035.3,477.2 1039,478.6 C1042.7,480.0 1047.3,481.4 1049,482" stroke="#000080" stroke-width="2.05" fill="none" stroke-linejoin="round"/></g><path d="M13,482.5 H1317 M13,514.5 H1317" stroke="#32cd32" stroke-width="1" stroke-dasharray="9 6 3 6" fill="none"/><path d="M13,527.5 H1317" stroke="#ff0000" stroke-width="1" stroke-dasharray="9 6 3 6" fill="none"/><path d="M13,498.5 H1317" stroke="#778899" stroke-width="1" fill="none"/><g clip-path="url(#cc)"><path d="M13.5,288 V312 M17.5,284 V301 M21.5,261 V292 M25.5,248 V273 M29.5,237 V262 M33.5,221 V245 M37.5,231 V247 M41.5,234 V264 M45.5,228 V261 M49.5,227 V246 M53.5,226 V238 M57.5,204 V234 M61.5,211 V235 M65.5,214 V231 M69.5,199 V237 M73.5,216 V229 M77.5,220 V232 M81.5,220 V233 M85.5,221 V238 M89.5,198 V268 M93.5,233 V306 M97.5,291 V312 M101.5,287 V317 M105.5,293 V326 M109.5,312 V336 M113.5,297 V321 M117.5,301 V335 M121.5,312 V330 M125.5,320 V356 M129.5,327 V366 M133.5,336 V393 M137.5,376 V441 M141.5,424 V466 M145.5,460 V509 M149.5,458 V485 M153.5,445 V475 M157.5,435 V459 M161.5,438 V459 M165.5,445 V486 M169.5,453 V489 M173.5,438 V467 M177.5,453 V500 M181.5,478 V506 M185.5,469 V527 M189.5,457 V536 M193.5,505 V529 M197.5,507 V535 M201.5,490 V518 M205.5,469 V506 M209.5,493 V527 M213.5,489 V516 M217.5,492 V513 M221.5,499 V528 M225.5,503 V527 M229.5,485 V512 M233.5,453 V497 M237.5,464 V494 M241.5,472 V497 M245.5,458 V475 M249.5,456 V475 M253.5,462 V494 M257.5,461 V485 M261.5,456 V514 M265.5,461 V516 M269.5,440 V470 M273.5,423 V454 M277.5,411 V436 M281.5,410 V431 M285.5,411 V431 M289.5,418 V430 M293.5,422 V449 M297.5,437 V472 M301.5,446 V455 M305.5,422 V457 M309.5,402 V442 M313.5,398 V410 M317.5,386 V418 M321.5,386 V412 M325.5,402 V409 M329.5,398 V411 M333.5,400 V411 M337.5,402 V408 M341.5,379 V409 M345.5,369 V389 M349.5,381 V395 M353.5,372 V393 M357.5,377 V391 M361.5,380 V389 M365.5,367 V385 M369.5,371 V381 M373.5,375 V406 M377.5,384 V399 M381.5,374 V397 M385.5,376 V386 M389.5,371 V387 M393.5,372 V395 M397.5,378 V401 M401.5,394 V436 M405.5,408 V430 M409.5,390 V424 M413.5,385 V403 M417.5,398 V425 M421.5,400 V422 M425.5,376 V416 M429.5,383 V444 M433.5,410 V429 M437.5,400 V434 M441.5,394 V422 M445.5,407 V433 M449.5,426 V460 M453.5,429 V458 M457.5,429 V444 M461.5,431 V450 M465.5,431 V449 M469.5,422 V437 M473.5,419 V427 M477.5,379 V428 M481.5,385 V401 M485.5,392 V399 M489.5,392 V398 M493.5,373 V397 M497.5,360 V377 M501.5,367 V395 M505.5,375 V391 M509.5,375 V391 M513.5,386 V416 M517.5,388 V407 M521.5,376 V427 M525.5,410 V452 M529.5,425 V448 M533.5,418 V434 M537.5,419 V440 M541.5,420 V436 M545.5,413 V436 M549.5,410 V434 M553.5,414 V428 M557.5,409 V425 M561.5,409 V418 M565.5,394 V414 M569.5,331 V404 M573.5,349 V440 M577.5,411 V434 M581.5,421 V448 M585.5,440 V472 M589.5,440 V473 M593.5,453 V469 M597.5,438 V469 M601.5,435 V449 M605.5,430 V444 M609.5,436 V459 M613.5,446 V460 M617.5,454 V510 M621.5,494 V515 M625.5,491 V515 M629.5,483 V508 M633.5,497 V510 M637.5,500 V524 M641.5,474 V515 M645.5,454 V507 M649.5,465 V501 M653.5,458 V475 M657.5,461 V480 M661.5,472 V492 M665.5,472 V491 M669.5,471 V507 M673.5,489 V521 M677.5,494 V511 M681.5,484 V500 M685.5,481 V497 M689.5,477 V502 M693.5,472 V495 M697.5,472 V488 M701.5,444 V483 M705.5,450 V465 M709.5,454 V474 M713.5,458 V469 M717.5,434 V465 M721.5,432 V444 M725.5,427 V442 M729.5,415 V434 M733.5,410 V426 M737.5,410 V442 M741.5,419 V449 M745.5,414 V427 M749.5,420 V439 M753.5,428 V441 M757.5,433 V477 M761.5,467 V490 M765.5,462 V489 M769.5,466 V488 M773.5,467 V496 M777.5,467 V484 M781.5,439 V483 M785.5,443 V476 M789.5,460 V539 M793.5,503 V526 M797.5,499 V523 M801.5,497 V526 M805.5,502 V523 M809.5,494 V533 M813.5,500 V525 M817.5,507 V525 M821.5,504 V521 M825.5,503 V521 M829.5,518 V547 M833.5,530 V564 M837.5,534 V562 M841.5,512 V547 M845.5,514 V529 M849.5,503 V527 M853.5,509 V547 M857.5,522 V544 M861.5,526 V551 M865.5,533 V554 M869.5,532 V549 M873.5,528 V561 M877.5,544 V597 M881.5,533 V587 M885.5,508 V545 M889.5,500 V536 M893.5,516 V535 M897.5,483 V529 M901.5,485 V516 M905.5,490 V518 M909.5,478 V509 M913.5,476 V491 M917.5,471 V491 M921.5,475 V489 M925.5,475 V505 M929.5,459 V483 M933.5,454 V483 M937.5,452 V461 M941.5,446 V467 M945.5,453 V472 M949.5,456 V471 M953.5,464 V473 M957.5,464 V475 M961.5,460 V471 M965.5,456 V469 M969.5,454 V467 M973.5,455 V489 M977.5,456 V472 M981.5,437 V469 M985.5,439 V461 M989.5,451 V465 M993.5,460 V469 M997.5,460 V480 M1001.5,458 V500 M1005.5,480 V497 M1009.5,468 V486 M1013.5,471 V493 M1017.5,484 V498 M1021.5,485 V517 M1025.5,483 V515 M1029.5,482 V524 M1033.5,480 V505 M1037.5,479 V501 M1041.5,494 V517 M1045.5,492 V511 M1049.5,494 V502 " stroke="#000" stroke-width="1" fill="none"/><g fill="#fff" stroke="#000" stroke-width="1"><rect x="12.5" y="290.5" width="2" height="11"/><rect x="16.5" y="288.5" width="2" height="6"/><rect x="20.5" y="267.5" width="2" height="22"/><rect x="24.5" y="256.5" width="2" height="12"/><rect x="28.5" y="238.5" width="2" height="19"/><rect x="32.5" y="235.5" width="2" height="4"/><rect x="44.5" y="241.5" width="2" height="17"/><rect x="48.5" y="228.5" width="2" height="14"/><rect x="56.5" y="214.5" width="2" height="17"/><rect x="80.5" y="224.5" width="2" height="3"/><rect x="108.5" y="319.5" width="2" height="3"/><rect x="112.5" y="308.5" width="2" height="12"/><rect x="128.5" y="339.5" width="2" height="13"/><rect x="148.5" y="465.5" width="2" height="15"/><rect x="152.5" y="448.5" width="2" height="18"/><rect x="168.5" y="456.5" width="2" height="13"/><rect x="172.5" y="454.5" width="2" height="3"/><rect x="184.5" y="473.5" width="2" height="30"/><rect x="192.5" y="513.5" width="2" height="7"/><rect x="200.5" y="499.5" width="2" height="16"/><rect x="204.5" y="495.5" width="2" height="4"/><rect x="212.5" y="501.5" width="2" height="6"/><rect x="224.5" y="505.5" width="2" height="18"/><rect x="228.5" y="486.5" width="2" height="19"/><rect x="232.5" y="469.5" width="2" height="17"/><rect x="240.5" y="473.5" width="2" height="4"/><rect x="244.5" y="466.5" width="2" height="7"/><rect x="248.5" y="464.5" width="2" height="3"/><rect x="256.5" y="472.5" width="2" height="10"/><rect x="264.5" y="465.5" width="2" height="47"/><rect x="268.5" y="446.5" width="2" height="20"/><rect x="272.5" y="430.5" width="2" height="16"/><rect x="276.5" y="413.5" width="2" height="18"/><rect x="304.5" y="431.5" width="2" height="22"/><rect x="308.5" y="406.5" width="2" height="27"/><rect x="316.5" y="388.5" width="2" height="19"/><rect x="324.5" y="403.5" width="2" height="3"/><rect x="328.5" y="403.5" width="2" height="3"/><rect x="332.5" y="404.5" width="2" height="3"/><rect x="340.5" y="384.5" width="2" height="20"/><rect x="352.5" y="382.5" width="2" height="8"/><rect x="364.5" y="376.5" width="2" height="3"/><rect x="380.5" y="379.5" width="2" height="16"/><rect x="408.5" y="390.5" width="2" height="32"/><rect x="420.5" y="410.5" width="2" height="9"/><rect x="424.5" y="386.5" width="2" height="24"/><rect x="436.5" y="403.5" width="2" height="14"/><rect x="452.5" y="435.5" width="2" height="14"/><rect x="456.5" y="433.5" width="2" height="2"/><rect x="464.5" y="434.5" width="2" height="13"/><rect x="468.5" y="423.5" width="2" height="12"/><rect x="476.5" y="396.5" width="2" height="29"/><rect x="480.5" y="394.5" width="2" height="2"/><rect x="492.5" y="374.5" width="2" height="22"/><rect x="496.5" y="368.5" width="2" height="7"/><rect x="504.5" y="378.5" width="2" height="5"/><rect x="516.5" y="394.5" width="2" height="11"/><rect x="528.5" y="426.5" width="2" height="12"/><rect x="536.5" y="423.5" width="2" height="8"/><rect x="544.5" y="417.5" width="2" height="15"/><rect x="552.5" y="416.5" width="2" height="7"/><rect x="556.5" y="411.5" width="2" height="5"/><rect x="564.5" y="399.5" width="2" height="13"/><rect x="568.5" y="359.5" width="2" height="41"/><rect x="596.5" y="446.5" width="2" height="19"/><rect x="600.5" y="437.5" width="2" height="10"/><rect x="624.5" y="494.5" width="2" height="11"/><rect x="640.5" y="476.5" width="2" height="31"/><rect x="644.5" y="476.5" width="2" height="18"/><rect x="648.5" y="466.5" width="2" height="28"/><rect x="652.5" y="465.5" width="2" height="3"/><rect x="672.5" y="496.5" width="2" height="4"/><rect x="680.5" y="490.5" width="2" height="8"/><rect x="684.5" y="483.5" width="2" height="8"/><rect x="688.5" y="481.5" width="2" height="3"/><rect x="692.5" y="477.5" width="2" height="5"/><rect x="696.5" y="473.5" width="2" height="4"/><rect x="700.5" y="452.5" width="2" height="19"/><rect x="716.5" y="440.5" width="2" height="22"/><rect x="724.5" y="430.5" width="2" height="10"/><rect x="728.5" y="420.5" width="2" height="10"/><rect x="732.5" y="412.5" width="2" height="9"/><rect x="740.5" y="421.5" width="2" height="19"/><rect x="760.5" y="471.5" width="2" height="4"/><rect x="776.5" y="477.5" width="2" height="3"/><rect x="780.5" y="470.5" width="2" height="5"/><rect x="784.5" y="462.5" width="2" height="8"/><rect x="804.5" y="506.5" width="2" height="10"/><rect x="816.5" y="512.5" width="2" height="8"/><rect x="836.5" y="541.5" width="2" height="18"/><rect x="840.5" y="516.5" width="2" height="25"/><rect x="848.5" y="510.5" width="2" height="14"/><rect x="856.5" y="529.5" width="2" height="9"/><rect x="864.5" y="535.5" width="2" height="8"/><rect x="880.5" y="534.5" width="2" height="49"/><rect x="884.5" y="518.5" width="2" height="17"/><rect x="892.5" y="525.5" width="2" height="6"/><rect x="896.5" y="489.5" width="2" height="35"/><rect x="908.5" y="480.5" width="2" height="20"/><rect x="916.5" y="479.5" width="2" height="7"/><rect x="928.5" y="475.5" width="2" height="6"/><rect x="932.5" y="457.5" width="2" height="18"/><rect x="940.5" y="454.5" width="2" height="10"/><rect x="956.5" y="466.5" width="2" height="4"/><rect x="960.5" y="462.5" width="2" height="4"/><rect x="968.5" y="458.5" width="2" height="4"/><rect x="976.5" y="460.5" width="2" height="8"/><rect x="980.5" y="440.5" width="2" height="22"/><rect x="1004.5" y="481.5" width="2" height="12"/><rect x="1008.5" y="474.5" width="2" height="8"/><rect x="1024.5" y="486.5" width="2" height="25"/><rect x="1032.5" y="480.5" width="2" height="23"/><rect x="1044.5" y="495.5" width="2" height="8"/></g><g fill="#000"><rect x="36" y="235" width="3" height="4"/><rect x="40" y="236" width="3" height="22"/><rect x="52" y="228" width="3" height="4"/><rect x="60" y="214" width="3" height="7"/><rect x="64" y="219" width="3" height="3"/><rect x="68" y="220" width="3" height="3"/><rect x="72" y="221" width="3" height="4"/><rect x="76" y="222" width="3" height="6"/><rect x="84" y="224" width="3" height="8"/><rect x="88" y="230" width="3" height="5"/><rect x="92" y="234" width="3" height="61"/><rect x="96" y="294" width="3" height="11"/><rect x="100" y="301" width="3" height="7"/><rect x="104" y="306" width="3" height="17"/><rect x="116" y="308" width="3" height="12"/><rect x="120" y="318" width="3" height="7"/><rect x="124" y="322" width="3" height="31"/><rect x="132" y="339" width="3" height="43"/><rect x="136" y="379" width="3" height="48"/><rect x="140" y="426" width="3" height="39"/><rect x="144" y="462" width="3" height="19"/><rect x="156" y="446" width="3" height="3"/><rect x="160" y="446" width="3" height="3"/><rect x="164" y="446" width="3" height="24"/><rect x="176" y="454" width="3" height="37"/><rect x="180" y="490" width="3" height="15"/><rect x="188" y="473" width="3" height="47"/><rect x="196" y="512" width="3" height="5"/><rect x="208" y="495" width="3" height="13"/><rect x="216" y="500" width="3" height="2"/><rect x="220" y="500" width="3" height="21"/><rect x="236" y="469" width="3" height="9"/><rect x="252" y="464" width="3" height="19"/><rect x="260" y="472" width="3" height="41"/><rect x="280" y="412" width="3" height="16"/><rect x="284" y="419" width="3" height="9"/><rect x="288" y="426" width="3" height="3"/><rect x="292" y="426" width="3" height="16"/><rect x="296" y="438" width="3" height="16"/><rect x="300" y="450" width="3" height="4"/><rect x="312" y="406" width="3" height="3"/><rect x="320" y="388" width="3" height="19"/><rect x="336" y="404" width="3" height="2"/><rect x="344" y="384" width="3" height="3"/><rect x="348" y="385" width="3" height="4"/><rect x="356" y="382" width="3" height="4"/><rect x="360" y="383" width="3" height="2"/><rect x="368" y="376" width="3" height="2"/><rect x="372" y="376" width="3" height="15"/><rect x="376" y="390" width="3" height="5"/><rect x="384" y="378" width="3" height="3"/><rect x="388" y="379" width="3" height="2"/><rect x="392" y="379" width="3" height="10"/><rect x="396" y="388" width="3" height="9"/><rect x="400" y="396" width="3" height="22"/><rect x="404" y="416" width="3" height="7"/><rect x="412" y="390" width="3" height="11"/><rect x="416" y="400" width="3" height="20"/><rect x="428" y="386" width="3" height="27"/><rect x="432" y="411" width="3" height="8"/><rect x="440" y="402" width="3" height="19"/><rect x="444" y="419" width="3" height="9"/><rect x="448" y="426" width="3" height="23"/><rect x="460" y="432" width="3" height="16"/><rect x="472" y="422" width="3" height="4"/><rect x="484" y="394" width="3" height="3"/><rect x="488" y="394" width="3" height="3"/><rect x="500" y="368" width="3" height="16"/><rect x="508" y="377" width="3" height="12"/><rect x="512" y="388" width="3" height="18"/><rect x="520" y="394" width="3" height="26"/><rect x="524" y="418" width="3" height="21"/><rect x="532" y="426" width="3" height="7"/><rect x="540" y="423" width="3" height="8"/><rect x="548" y="417" width="3" height="6"/><rect x="560" y="411" width="3" height="2"/><rect x="572" y="359" width="3" height="57"/><rect x="576" y="412" width="3" height="19"/><rect x="580" y="436" width="3" height="9"/><rect x="584" y="443" width="3" height="22"/><rect x="588" y="463" width="3" height="2"/><rect x="592" y="463" width="3" height="3"/><rect x="604" y="437" width="3" height="5"/><rect x="608" y="440" width="3" height="13"/><rect x="612" y="448" width="3" height="10"/><rect x="616" y="456" width="3" height="47"/><rect x="620" y="501" width="3" height="6"/><rect x="628" y="493" width="3" height="8"/><rect x="632" y="499" width="3" height="6"/><rect x="636" y="503" width="3" height="5"/><rect x="656" y="464" width="3" height="13"/><rect x="660" y="476" width="3" height="4"/><rect x="664" y="477" width="3" height="8"/><rect x="668" y="483" width="3" height="19"/><rect x="676" y="495" width="3" height="4"/><rect x="704" y="452" width="3" height="9"/><rect x="708" y="458" width="3" height="5"/><rect x="712" y="460" width="3" height="2"/><rect x="720" y="439" width="3" height="3"/><rect x="736" y="412" width="3" height="29"/><rect x="744" y="423" width="3" height="3"/><rect x="748" y="423" width="3" height="8"/><rect x="752" y="429" width="3" height="11"/><rect x="756" y="438" width="3" height="38"/><rect x="764" y="471" width="3" height="13"/><rect x="768" y="469" width="3" height="14"/><rect x="772" y="468" width="3" height="14"/><rect x="788" y="461" width="3" height="45"/><rect x="792" y="505" width="3" height="3"/><rect x="796" y="505" width="3" height="2"/><rect x="800" y="504" width="3" height="13"/><rect x="808" y="506" width="3" height="5"/><rect x="812" y="510" width="3" height="11"/><rect x="820" y="509" width="3" height="2"/><rect x="824" y="509" width="3" height="10"/><rect x="828" y="518" width="3" height="15"/><rect x="832" y="531" width="3" height="29"/><rect x="844" y="516" width="3" height="10"/><rect x="852" y="510" width="3" height="28"/><rect x="860" y="528" width="3" height="16"/><rect x="868" y="537" width="3" height="5"/><rect x="872" y="541" width="3" height="15"/><rect x="876" y="554" width="3" height="30"/><rect x="888" y="518" width="3" height="17"/><rect x="900" y="489" width="3" height="12"/><rect x="904" y="499" width="3" height="3"/><rect x="912" y="480" width="3" height="7"/><rect x="920" y="479" width="3" height="3"/><rect x="924" y="480" width="3" height="2"/><rect x="936" y="453" width="3" height="8"/><rect x="944" y="454" width="3" height="13"/><rect x="948" y="465" width="3" height="2"/><rect x="952" y="465" width="3" height="6"/><rect x="964" y="462" width="3" height="2"/><rect x="972" y="457" width="3" height="12"/><rect x="984" y="440" width="3" height="19"/><rect x="988" y="457" width="3" height="4"/><rect x="992" y="460" width="3" height="3"/><rect x="996" y="462" width="3" height="11"/><rect x="1000" y="471" width="3" height="23"/><rect x="1012" y="473" width="3" height="17"/><rect x="1016" y="487" width="3" height="2"/><rect x="1020" y="488" width="3" height="24"/><rect x="1028" y="486" width="3" height="18"/><rect x="1036" y="480" width="3" height="20"/><rect x="1040" y="496" width="3" height="7"/><rect x="1048" y="495" width="3" height="5"/></g><path d="M1081.5,468.5 h7 v9 h4.5 l-8,9.5 l-8,-9.5 h4.5 z" fill="none" stroke="#ff0000" stroke-width="1" shape-rendering="auto"/><path d="M1049,110 h10 l-5,5.5z" fill="#778899" shape-rendering="auto"/></g></svg><div class="a" style="left:12px;top:109px;width:1306px;height:567px;border:1px solid #000;box-sizing:border-box"></div><div class="a" style="left:1318px;top:111px;width:2px;height:1px;background:#000"></div><div class="a" style="left:1318px;top:144px;width:2px;height:1px;background:#000"></div><div class="a" style="left:1318px;top:177px;width:2px;height:1px;background:#000"></div><div class="a" style="left:1318px;top:210px;width:2px;height:1px;background:#000"></div><div class="a" style="left:1318px;top:243px;width:2px;height:1px;background:#000"></div><div class="a" style="left:1318px;top:276px;width:2px;height:1px;background:#000"></div><div class="a" style="left:1318px;top:309px;width:2px;height:1px;background:#000"></div><div class="a" style="left:1318px;top:342px;width:2px;height:1px;background:#000"></div><div class="a" style="left:1318px;top:375px;width:2px;height:1px;background:#000"></div><div class="a" style="left:1318px;top:408px;width:2px;height:1px;background:#000"></div><div class="a" style="left:1318px;top:441px;width:2px;height:1px;background:#000"></div><div class="a" style="left:1318px;top:474px;width:2px;height:1px;background:#000"></div><div class="a" style="left:1318px;top:507px;width:2px;height:1px;background:#000"></div><div class="a" style="left:1318px;top:540px;width:2px;height:1px;background:#000"></div><div class="a" style="left:1318px;top:573px;width:2px;height:1px;background:#000"></div><div class="a" style="left:1318px;top:606px;width:2px;height:1px;background:#000"></div><div class="a" style="left:1318px;top:639px;width:2px;height:1px;background:#000"></div><div class="a" style="left:1318px;top:672px;width:2px;height:1px;background:#000"></div><div class="a" style="left:13px;top:676px;width:1px;height:3px;background:#000"></div><div class="a" style="left:77px;top:676px;width:1px;height:3px;background:#000"></div><div class="a" style="left:141px;top:676px;width:1px;height:3px;background:#000"></div><div class="a" style="left:205px;top:676px;width:1px;height:3px;background:#000"></div><div class="a" style="left:269px;top:676px;width:1px;height:3px;background:#000"></div><div class="a" style="left:333px;top:676px;width:1px;height:3px;background:#000"></div><div class="a" style="left:397px;top:676px;width:1px;height:3px;background:#000"></div><div class="a" style="left:461px;top:676px;width:1px;height:3px;background:#000"></div><div class="a" style="left:525px;top:676px;width:1px;height:3px;background:#000"></div><div class="a" style="left:589px;top:676px;width:1px;height:3px;background:#000"></div><div class="a" style="left:653px;top:676px;width:1px;height:3px;background:#000"></div><div class="a" style="left:717px;top:676px;width:1px;height:3px;background:#000"></div><div class="a" style="left:781px;top:676px;width:1px;height:3px;background:#000"></div><div class="a" style="left:845px;top:676px;width:1px;height:3px;background:#000"></div><div class="a" style="left:909px;top:676px;width:1px;height:3px;background:#000"></div><div class="a" style="left:973px;top:676px;width:1px;height:3px;background:#000"></div><div class="a" style="left:1037px;top:676px;width:1px;height:3px;background:#000"></div><svg class="a" style="left:16px;top:116px" width="8" height="5"><path d="M0,0 h7 l-3.5,4z" fill="#000"/></svg><div class="t s" style="left:1323.20px;top:106.15px;font-size:9px;line-height:10.476px;color:#000;transform:scaleX(0.9620);transform-origin:0 0;">104.845</div><div class="t s" style="left:1323.20px;top:139.15px;font-size:9px;line-height:10.476px;color:#000;transform:scaleX(0.9620);transform-origin:0 0;">104.570</div><div class="t s" style="left:1323.20px;top:172.15px;font-size:9px;line-height:10.476px;color:#000;transform:scaleX(0.9620);transform-origin:0 0;">104.295</div><div class="t s" style="left:1323.20px;top:205.15px;font-size:9px;line-height:10.476px;color:#000;transform:scaleX(0.9620);transform-origin:0 0;">104.025</div><div class="t s" style="left:1323.20px;top:238.15px;font-size:9px;line-height:10.476px;color:#000;transform:scaleX(0.9620);transform-origin:0 0;">103.750</div><div class="t s" style="left:1323.20px;top:271.15px;font-size:9px;line-height:10.476px;color:#000;transform:scaleX(0.9620);transform-origin:0 0;">103.475</div><div class="t s" style="left:1323.20px;top:304.15px;font-size:9px;line-height:10.476px;color:#000;transform:scaleX(0.9620);transform-origin:0 0;">103.200</div><div class="t s" style="left:1323.20px;top:337.15px;font-size:9px;line-height:10.476px;color:#000;transform:scaleX(0.9620);transform-origin:0 0;">102.925</div><div class="t s" style="left:1323.20px;top:370.15px;font-size:9px;line-height:10.476px;color:#000;transform:scaleX(0.9620);transform-origin:0 0;">102.655</div><div class="t s" style="left:1323.20px;top:403.15px;font-size:9px;line-height:10.476px;color:#000;transform:scaleX(0.9620);transform-origin:0 0;">102.380</div><div class="t s" style="left:1323.20px;top:436.15px;font-size:9px;line-height:10.476px;color:#000;transform:scaleX(0.9620);transform-origin:0 0;">102.105</div><div class="t s" style="left:1323.20px;top:469.15px;font-size:9px;line-height:10.476px;color:#000;transform:scaleX(0.9620);transform-origin:0 0;">101.830</div><div class="t s" style="left:1323.20px;top:502.15px;font-size:9px;line-height:10.476px;color:#000;transform:scaleX(0.9620);transform-origin:0 0;">101.560</div><div class="t s" style="left:1323.20px;top:535.15px;font-size:9px;line-height:10.476px;color:#000;transform:scaleX(0.9620);transform-origin:0 0;">101.285</div><div class="t s" style="left:1323.20px;top:568.15px;font-size:9px;line-height:10.476px;color:#000;transform:scaleX(0.9620);transform-origin:0 0;">101.010</div><div class="t s" style="left:1323.20px;top:601.15px;font-size:9px;line-height:10.476px;color:#000;transform:scaleX(0.9620);transform-origin:0 0;">100.735</div><div class="t s" style="left:1323.20px;top:634.15px;font-size:9px;line-height:10.476px;color:#000;transform:scaleX(0.9620);transform-origin:0 0;">100.465</div><div class="t s" style="left:1323.20px;top:667.15px;font-size:9px;line-height:10.476px;color:#000;transform:scaleX(0.9620);transform-origin:0 0;">100.190</div><div class="t s" style="left:11.70px;top:680.25px;font-size:9px;line-height:10.476px;color:#000;transform:scaleX(1.0266);transform-origin:0 0;">1 Apr 2014</div><div class="t s" style="left:75.70px;top:680.25px;font-size:9px;line-height:10.476px;color:#000;transform:scaleX(1.0234);transform-origin:0 0;">4 Apr 00:00</div><div class="t s" style="left:139.70px;top:680.25px;font-size:9px;line-height:10.476px;color:#000;transform:scaleX(1.0234);transform-origin:0 0;">8 Apr 16:00</div><div class="t s" style="left:203.70px;top:680.25px;font-size:9px;line-height:10.476px;color:#000;transform:scaleX(1.0105);transform-origin:0 0;">11 Apr 08:00</div><div class="t s" style="left:267.70px;top:680.25px;font-size:9px;line-height:10.476px;color:#000;transform:scaleX(1.0239);transform-origin:0 0;">16 Apr 00:00</div><div class="t s" style="left:331.70px;top:680.25px;font-size:9px;line-height:10.476px;color:#000;transform:scaleX(1.0239);transform-origin:0 0;">18 Apr 16:00</div><div class="t s" style="left:395.70px;top:680.25px;font-size:9px;line-height:10.476px;color:#000;transform:scaleX(1.0239);transform-origin:0 0;">23 Apr 08:00</div><div class="t s" style="left:459.70px;top:680.25px;font-size:9px;line-height:10.476px;color:#000;transform:scaleX(1.0239);transform-origin:0 0;">28 Apr 00:00</div><div class="t s" style="left:523.70px;top:680.25px;font-size:9px;line-height:10.476px;color:#000;transform:scaleX(1.0239);transform-origin:0 0;">30 Apr 16:00</div><div class="t s" style="left:587.70px;top:680.25px;font-size:9px;line-height:10.476px;color:#000;transform:scaleX(1.0413);transform-origin:0 0;">5 May 08:00</div><div class="t s" style="left:651.70px;top:680.25px;font-size:9px;line-height:10.476px;color:#000;transform:scaleX(1.0413);transform-origin:0 0;">8 May 00:00</div><div class="t s" style="left:715.70px;top:680.25px;font-size:9px;line-height:10.476px;color:#000;transform:scaleX(1.0401);transform-origin:0 0;">12 May 16:00</div><div class="t s" style="left:779.70px;top:680.25px;font-size:9px;line-height:10.476px;color:#000;transform:scaleX(1.0401);transform-origin:0 0;">15 May 08:00</div><div class="t s" style="left:843.70px;top:680.25px;font-size:9px;line-height:10.476px;color:#000;transform:scaleX(1.0401);transform-origin:0 0;">20 May 00:00</div><div class="t s" style="left:907.70px;top:680.25px;font-size:9px;line-height:10.476px;color:#000;transform:scaleX(1.0401);transform-origin:0 0;">22 May 16:00</div><div class="t s" style="left:971.70px;top:680.25px;font-size:9px;line-height:10.476px;color:#000;transform:scaleX(1.0401);transform-origin:0 0;">27 May 08:00</div><div class="t s" style="left:1035.70px;top:680.25px;font-size:9px;line-height:10.476px;color:#000;transform:scaleX(1.0401);transform-origin:0 0;">30 May 00:00</div><div class="a" style="left:1319px;top:492px;width:41px;height:11px;background:#000;"></div><div class="t s" style="left:1323.20px;top:492.65px;font-size:9px;line-height:10.476px;color:#fff;transform:scaleX(0.9620);transform-origin:0 0;">101.635</div><div class="a" style="left:26px;top:112px;width:201px;height:11px;background:#fff;"></div><div class="t s" style="left:28.60px;top:113.15px;font-size:9px;line-height:10.476px;color:#000;transform:scaleX(1.1639);transform-origin:0 0;">USDJPY,H4</div><div class="t s" style="left:86.00px;top:113.15px;font-size:9px;line-height:10.476px;color:#000;transform:scaleX(0.9500);transform-origin:0 0;">101.661</div><div class="t s" style="left:121.60px;top:113.15px;font-size:9px;line-height:10.476px;color:#000;transform:scaleX(0.9620);transform-origin:0 0;">101.666</div><div class="t s" style="left:157.60px;top:113.15px;font-size:9px;line-height:10.476px;color:#000;transform:scaleX(0.9560);transform-origin:0 0;">101.618</div><div class="t s" style="left:193.60px;top:113.15px;font-size:9px;line-height:10.476px;color:#000;transform:scaleX(0.9620);transform-origin:0 0;">101.635</div><div class="a" style="left:13px;top:471px;width:105px;height:11px;background:#fff;"></div><div class="t s" style="left:19.70px;top:471.95px;font-size:9px;line-height:10.476px;color:#000;transform:scaleX(0.9792);transform-origin:0 0;">#2000666 sell limit 0.20</div><div class="a" style="left:13px;top:503px;width:85px;height:11px;background:#fff;"></div><div class="t s" style="left:19.70px;top:503.95px;font-size:9px;line-height:10.476px;color:#000;transform:scaleX(0.9786);transform-origin:0 0;">#1935039 sell 0.20</div><div class="a" style="left:13px;top:516px;width:59px;height:11px;background:#fff;"></div><div class="t s" style="left:19.70px;top:516.45px;font-size:9px;line-height:10.476px;color:#000;transform:scaleX(0.9679);transform-origin:0 0;">#1935039 tp</div><div class="a" style="left:10px;top:695px;width:1350px;height:1px;background:#000;"></div><div class="a" style="left:10px;top:696px;width:1352px;height:20px;background:#f0f0f0;"></div><div class="a" style="left:8px;top:715px;width:1354px;height:1px;background:#fff;"></div><div class="a" style="left:8px;top:716px;width:1354px;height:20px;background:#f0f0f0;"></div><div class="a" style="left:172px;top:696px;width:76px;height:18px;background:#fff;border:1px solid #000;border-top:none;box-sizing:border-box;"></div><div class="a" style="left:173px;top:695px;width:74px;height:1px;background:#fff;"></div><div class="t s" style="left:22.00px;top:698.79px;font-size:11px;line-height:12.804px;color:#7d7d7d;transform:scaleX(0.9862);transform-origin:0 0;">EURUSD,H1</div><div class="t s" style="left:103.40px;top:698.79px;font-size:11px;line-height:12.804px;color:#7d7d7d;transform:scaleX(0.9682);transform-origin:0 0;">GBPUSD,H1</div><div class="t s" style="left:182.00px;top:698.79px;font-size:11px;line-height:12.804px;color:#000;transform:scaleX(1.0433);transform-origin:0 0;">USDJPY,H4</div><div class="t s" style="left:258.00px;top:698.79px;font-size:11px;line-height:12.804px;color:#7d7d7d;transform:scaleX(1.0589);transform-origin:0 0;">EURJPY,H1</div><div class="t s" style="left:335.00px;top:698.79px;font-size:11px;line-height:12.804px;color:#7d7d7d;transform:scaleX(0.9938);transform-origin:0 0;">GBPCHF,H4</div><div class="t s" style="left:416.00px;top:698.79px;font-size:11px;line-height:12.804px;color:#7d7d7d;transform:scaleX(0.9511);transform-origin:0 0;">AUDUSD,Daily</div><div class="t s" style="left:505.50px;top:698.79px;font-size:11px;line-height:12.804px;color:#7d7d7d;transform:scaleX(0.9489);transform-origin:0 0;">NZDUSD,Daily</div><div class="t s" style="left:594.50px;top:698.79px;font-size:11px;line-height:12.804px;color:#7d7d7d;transform:scaleX(1.0131);transform-origin:0 0;">EURCHF,H4</div><div class="t s" style="left:674.00px;top:698.79px;font-size:11px;line-height:12.804px;color:#7d7d7d;transform:scaleX(0.9775);transform-origin:0 0;">XAUUSD,H4</div><div class="t s" style="left:754.00px;top:698.79px;font-size:11px;line-height:12.804px;color:#7d7d7d;transform:scaleX(0.9568);transform-origin:0 0;">EURGBP,Daily</div><div class="t s" style="left:842.50px;top:698.79px;font-size:11px;line-height:12.804px;color:#7d7d7d;transform:scaleX(1.0290);transform-origin:0 0;">GBPJPY,H1</div><div class="t s" style="left:918.50px;top:698.79px;font-size:11px;line-height:12.804px;color:#7d7d7d;transform:scaleX(0.9699);transform-origin:0 0;">AUDNZD,H4</div><div class="t s" style="left:998.50px;top:698.79px;font-size:11px;line-height:12.804px;color:#7d7d7d;transform:scaleX(0.9859);transform-origin:0 0;">USDCAD,H4</div><div class="t s" style="left:1078.00px;top:698.79px;font-size:11px;line-height:12.804px;color:#7d7d7d;transform:scaleX(0.9986);transform-origin:0 0;">USDCHF,H4</div><div class="a" style="left:92px;top:698px;width:1px;height:13px;background:#6a6a6a;"></div><div class="a" style="left:324px;top:698px;width:1px;height:13px;background:#6a6a6a;"></div><div class="a" style="left:405px;top:698px;width:1px;height:13px;background:#6a6a6a;"></div><div class="a" style="left:496px;top:698px;width:1px;height:13px;background:#6a6a6a;"></div><div class="a" style="left:585px;top:698px;width:1px;height:13px;background:#6a6a6a;"></div><div class="a" style="left:664px;top:698px;width:1px;height:13px;background:#6a6a6a;"></div><div class="a" style="left:744px;top:698px;width:1px;height:13px;background:#6a6a6a;"></div><div class="a" style="left:832px;top:698px;width:1px;height:13px;background:#6a6a6a;"></div><div class="a" style="left:908px;top:698px;width:1px;height:13px;background:#6a6a6a;"></div><div class="a" style="left:988px;top:698px;width:1px;height:13px;background:#6a6a6a;"></div><div class="a" style="left:1068px;top:698px;width:1px;height:13px;background:#6a6a6a;"></div><div class="a" style="left:1148px;top:698px;width:1px;height:13px;background:#6a6a6a;"></div><svg class="a" style="left:1330px;top:700px" width="30" height="10"><path d="M7,1 v8 l-4,-4z M21,1 v8 l4,-4z" fill="#9a9a9a"/></svg><div class="t s" style="left:10.30px;top:721.79px;font-size:11px;line-height:12.804px;color:#000;transform:scaleX(1.0002);transform-origin:0 0;">Для справки, нажмите F1</div><div class="t s" style="left:642.00px;top:721.79px;font-size:11px;line-height:12.804px;color:#000;transform:scaleX(1.0509);transform-origin:0 0;">Default</div><div class="t s" style="left:758.00px;top:721.79px;font-size:11px;line-height:12.804px;color:#000;transform:scaleX(0.9513);transform-origin:0 0;">2014.05.27 16:00</div><div class="t s" style="left:860.00px;top:721.79px;font-size:11px;line-height:12.804px;color:#000;transform:scaleX(0.9821);transform-origin:0 0;">O: 101.935</div><div class="t s" style="left:931.00px;top:721.79px;font-size:11px;line-height:12.804px;color:#000;transform:scaleX(0.9848);transform-origin:0 0;">H: 102.139</div><div class="t s" style="left:1002.00px;top:721.79px;font-size:11px;line-height:12.804px;color:#000;transform:scaleX(0.9641);transform-origin:0 0;">L: 101.890</div><div class="t s" style="left:1071.00px;top:721.79px;font-size:11px;line-height:12.804px;color:#000;transform:scaleX(0.9576);transform-origin:0 0;">C: 102.111</div><div class="t s" style="left:1140.00px;top:721.79px;font-size:11px;line-height:12.804px;color:#000;transform:scaleX(1.0126);transform-origin:0 0;">V: 6478</div><div class="t s" style="left:1263.40px;top:721.79px;font-size:11px;line-height:12.804px;color:#000;transform:scaleX(0.9726);transform-origin:0 0;">3137/4 kb</div><div class="a" style="left:636px;top:719px;width:1px;height:16px;background:#a0a0a0;"></div><div class="a" style="left:752px;top:719px;width:1px;height:16px;background:#a0a0a0;"></div><div class="a" style="left:854px;top:719px;width:1px;height:16px;background:#a0a0a0;"></div><div class="a" style="left:925px;top:719px;width:1px;height:16px;background:#a0a0a0;"></div><div class="a" style="left:996px;top:719px;width:1px;height:16px;background:#a0a0a0;"></div><div class="a" style="left:1064px;top:719px;width:1px;height:16px;background:#a0a0a0;"></div><div class="a" style="left:1134px;top:719px;width:1px;height:16px;background:#a0a0a0;"></div><div class="a" style="left:1200px;top:719px;width:1px;height:16px;background:#a0a0a0;"></div><svg class="a" style="left:0;top:0" width="1370" height="744"><rect x="1206" y="721" width="2" height="9" fill="#4c7000"/><rect x="1206" y="731" width="2" height="2" fill="#8c0000"/><rect x="1209" y="721" width="2" height="8" fill="#4c7000"/><rect x="1209" y="730" width="2" height="3" fill="#8c0000"/><rect x="1212" y="721" width="2" height="7" fill="#4c7000"/><rect x="1212" y="729" width="2" height="4" fill="#8c0000"/><rect x="1215" y="721" width="2" height="6" fill="#4c7000"/><rect x="1215" y="728" width="2" height="5" fill="#8c0000"/><rect x="1218" y="721" width="2" height="5" fill="#4c7000"/><rect x="1218" y="727" width="2" height="6" fill="#8c0000"/><rect x="1221" y="721" width="2" height="4" fill="#4c7000"/><rect x="1221" y="726" width="2" height="7" fill="#8c0000"/><rect x="1224" y="721" width="2" height="3" fill="#4c7000"/><rect x="1224" y="725" width="2" height="8" fill="#8c0000"/><rect x="1227" y="721" width="2" height="2" fill="#4c7000"/><rect x="1227" y="724" width="2" height="9" fill="#8c0000"/><path d="M1361,722 L1348,735 M1361,726 L1352,735 M1361,730 L1356,735" stroke="#b0b0b0" stroke-width="1.3"/></svg><div class="a" style="left:8px;top:736px;width:1362px;height:8px;background:#55b8be;"></div><svg class="a" style="left:0;top:736px" width="1370" height="8" viewBox="0 736 1370 8"><rect x="8" y="736" width="1362" height="1" fill="#3f9ea5"/><rect x="60.5" y="737.5" width="57" height="8" fill="#7ac6ca" stroke="#9ad6d9" stroke-width="1"/><rect x="59.5" y="736.5" width="59" height="9" fill="none" stroke="#2f8d94" stroke-width="1" opacity=".7"/><rect x="246.5" y="737.5" width="57" height="8" fill="#7ac6ca" stroke="#9ad6d9" stroke-width="1"/><rect x="245.5" y="736.5" width="59" height="9" fill="none" stroke="#2f8d94" stroke-width="1" opacity=".7"/><rect x="308.5" y="737.5" width="57" height="8" fill="#8dd0d3" stroke="#e8f6f6" stroke-width="1"/><rect x="307.5" y="736.5" width="59" height="9" fill="none" stroke="#2f8d94" stroke-width="1" opacity=".7"/><rect x="370.5" y="737.5" width="57" height="8" fill="#7ac6ca" stroke="#9ad6d9" stroke-width="1"/><rect x="369.5" y="736.5" width="59" height="9" fill="none" stroke="#2f8d94" stroke-width="1" opacity=".7"/><rect x="432.5" y="737.5" width="57" height="8" fill="#7ac6ca" stroke="#9ad6d9" stroke-width="1"/><rect x="431.5" y="736.5" width="59" height="9" fill="none" stroke="#2f8d94" stroke-width="1" opacity=".7"/><path d="M29,744 L46,742.6 V744z" fill="#fff"/><ellipse cx="89" cy="746" rx="7" ry="4.2" fill="#e84a3a"/><rect x="136" y="740.8" width="29.6" height="4" fill="#008000"/><path d="M197,744 L216,740.6 V744z" fill="#2a4a9a"/><path d="M262,744 q2,-3.2 6,-3 q6,-.6 10,1 q2.6,.6 3,2z" fill="#00aff0"/><ellipse cx="338" cy="749" rx="13" ry="8.6" fill="#ff9a30"/><rect x="384" y="740.4" width="29.6" height="6" rx="1.5" fill="#8ab8dc" stroke="#1a5a9a" stroke-width="1"/><rect x="446" y="741" width="16.6" height="5" rx="1" fill="#5a9ae6"/></svg>
</body></html>
